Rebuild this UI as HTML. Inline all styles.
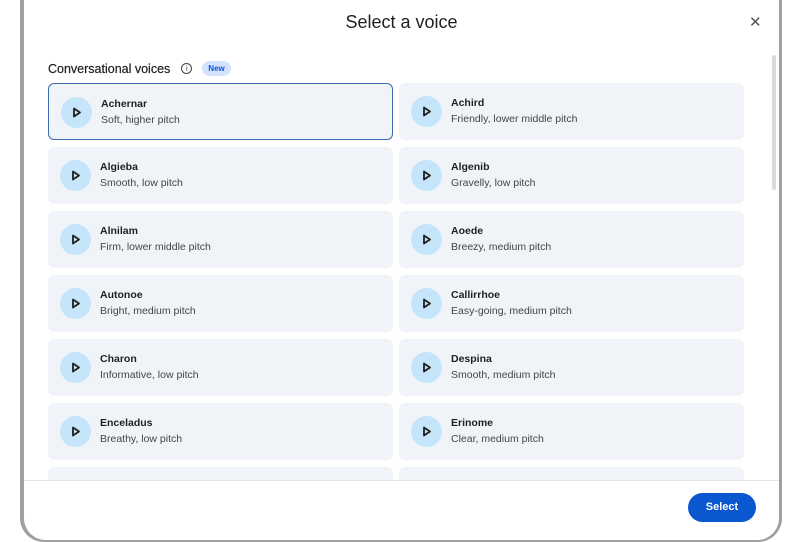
<!DOCTYPE html>
<html><head><meta charset="utf-8"><style>
*{box-sizing:border-box;margin:0;padding:0}
body{width:800px;height:533px;overflow:hidden;background:#fff;font-family:"Liberation Sans",Arial,sans-serif;position:relative}
.frame{position:absolute;left:20px;top:-30px;width:762px;height:572px;background:#a0a0a0;border-radius:24px}
.dlg{position:absolute;left:24px;top:-30px;width:755px;height:570px;background:#fff;border-radius:22px;overflow:hidden}
.title{position:absolute;top:42px;left:0;width:100%;text-align:center;font-size:18px;color:#1f1f1f}
.close{position:absolute;left:725px;top:43px;font-size:15px;color:#555;font-weight:300}
.sec{position:absolute;left:24px;top:91px;font-size:12.5px;color:#1f1f1f;display:flex;align-items:center;-webkit-text-stroke:0.2px #1f1f1f}
.info{width:11px;height:11px;border:1px solid #444;border-radius:50%;font-size:8px;line-height:9px;text-align:center;margin-left:11px;color:#444;-webkit-text-stroke:0}
.new{margin-left:10px;background:#d3e3fd;color:#0b57d0;font-size:8px;font-weight:bold;padding:3px 6px;border-radius:8px;-webkit-text-stroke:0}
.card{position:absolute;width:345px;height:57px;background:#f0f4f9;border-radius:6px}
.card.sel{border:1.5px solid #3b6bb5}
.pl{position:absolute;left:12px;top:13px;width:31px;height:31px;border-radius:50%;background:#c5e5fb}
.pl svg{position:absolute;left:11px;top:10px}
.n{position:absolute;left:52px;top:14px;font-size:10.5px;font-weight:bold;color:#1f1f1f}
.d{position:absolute;left:52px;top:30px;font-size:10.5px;color:#444}
.foot{position:absolute;left:0;top:510px;width:100%;border-top:1px solid #e3e3e3}
.btn{position:absolute;left:664px;top:523px;width:68px;height:29px;border-radius:15px;background:#0b57d0;color:#fff;font-size:11px;font-weight:bold;text-align:center;line-height:29px}
.sb{position:absolute;left:748px;top:85px;width:4px;height:135px;background:#dadada;border-radius:2px}
</style></head><body>
<div class="frame"></div>
<div class="dlg">
<div class="title">Select a voice</div>
<div class="close">✕</div>
<div class="sec">Conversational voices <span class="info">i</span><span class="new">New</span></div>
<div class="sb"></div>
<div id="cards"></div>
<div style="position:absolute;left:0;top:510px;width:100%;height:60px;background:#fff"></div>
<div class="foot"></div>
<div class="btn">Select</div>
</div>
<script>
var v=[["Achernar","Soft, higher pitch"],["Achird","Friendly, lower middle pitch"],["Algieba","Smooth, low pitch"],["Algenib","Gravelly, low pitch"],["Alnilam","Firm, lower middle pitch"],["Aoede","Breezy, medium pitch"],["Autonoe","Bright, medium pitch"],["Callirrhoe","Easy-going, medium pitch"],["Charon","Informative, low pitch"],["Despina","Smooth, medium pitch"],["Enceladus","Breathy, low pitch"],["Erinome","Clear, medium pitch"],["",""],["",""]];
var h="";
v.forEach(function(x,i){var l=i%2?375:24,t=113+Math.floor(i/2)*64;
h+='<div class="card'+(i==0?' sel':'')+'" style="left:'+l+'px;top:'+t+'px"><div class="pl"><svg width="10" height="11" viewBox="0 0 10 11"><path d="M2 1.5 L8 5.5 L2 9.5 Z" fill="#c5e5fb" stroke="#1f1f1f" stroke-width="1.8" stroke-linejoin="round"/></svg></div><div class="n">'+x[0]+'</div><div class="d">'+x[1]+'</div></div>';});
document.getElementById('cards').innerHTML=h;
</script>
</body></html>
